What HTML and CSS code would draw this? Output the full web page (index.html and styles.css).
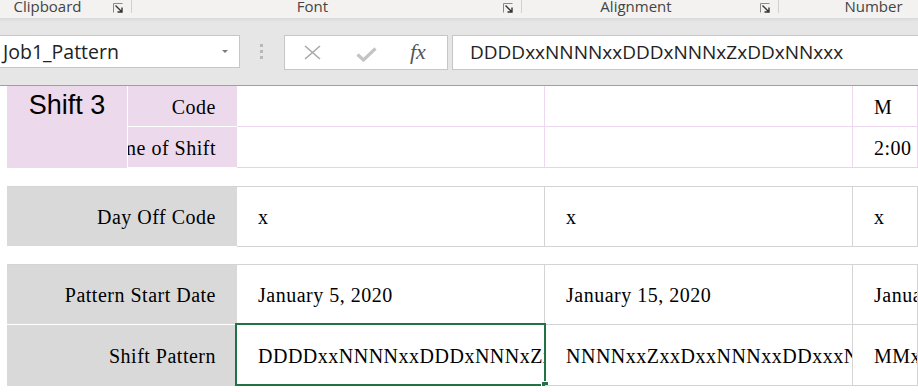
FILE: index.html
```html
<!DOCTYPE html>
<html lang="en">
<head>
    <meta charset="UTF-8">
    <meta name="viewport" content="width=device-width, initial-scale=1.0">
    <title>Job1_Pattern - Shift Patterns</title>
    <link rel="stylesheet" href="styles.css">
</head>
<body>
    <div class="ribbon">
        <div class="group group-clipboard">
            <span class="group-label">Clipboard</span>
            <svg class="launcher" viewBox="0 0 10 10" width="10" height="10"><path d="M0.5 9.5V0.5H9.5" fill="none" stroke="#8a8a8a"/><path d="M2.5 2.5L8.5 8.5M4.5 9H9V4.5" fill="none" stroke="#333" stroke-width="1.4"/></svg>
            <span class="group-sep"></span>
        </div>
        <div class="group group-font">
            <span class="group-label">Font</span>
            <svg class="launcher" viewBox="0 0 10 10" width="10" height="10"><path d="M0.5 9.5V0.5H9.5" fill="none" stroke="#8a8a8a"/><path d="M2.5 2.5L8.5 8.5M4.5 9H9V4.5" fill="none" stroke="#333" stroke-width="1.4"/></svg>
            <span class="group-sep"></span>
        </div>
        <div class="group group-alignment">
            <span class="group-label">Alignment</span>
            <svg class="launcher" viewBox="0 0 10 10" width="10" height="10"><path d="M0.5 9.5V0.5H9.5" fill="none" stroke="#8a8a8a"/><path d="M2.5 2.5L8.5 8.5M4.5 9H9V4.5" fill="none" stroke="#333" stroke-width="1.4"/></svg>
            <span class="group-sep"></span>
        </div>
        <div class="group group-number">
            <span class="group-label">Number</span>
        </div>
    </div>

    <div class="formula-bar">
        <div class="name-box">
            <span class="name-text">Job1_Pattern</span>
            <span class="name-arrow"></span>
        </div>
        <div class="grip"><i></i><i></i><i></i></div>
        <div class="fx-buttons">
            <svg class="btn-cancel" width="17" height="15" viewBox="0 0 17 15"><path d="M1 1L16 14M16 1L1 14" stroke="#a8a8a8" stroke-width="1.6" fill="none"/></svg>
            <svg class="btn-enter" width="21" height="15" viewBox="0 0 21 15"><path d="M1.5 7.5L7.5 13L19.5 1.5" stroke="#c4c4c4" stroke-width="3.2" fill="none"/></svg>
            <span class="fx">fx</span>
        </div>
        <div class="formula-input">DDDDxxNNNNxxDDDxNNNxZxDDxNNxxx</div>
    </div>

    <div class="sheet">
        <div class="shift-block">
            <div class="shift-name">Shift 3</div>
            <div class="shift-rows">
                <div class="shift-row">
                    <div class="label"><span>Code</span></div>
                    <div class="cell"></div>
                    <div class="cell"></div>
                    <div class="cell"><span class="cell-text">M</span></div>
                </div>
                <div class="shift-row">
                    <div class="label"><span>Start Time of Shift</span></div>
                    <div class="cell"></div>
                    <div class="cell"></div>
                    <div class="cell"><span class="cell-text">2:00 PM</span></div>
                </div>
            </div>
        </div>

        <div class="block">
            <div class="row">
                <div class="label"><span>Day Off Code</span></div>
                <div class="cell"><span class="cell-text">x</span></div>
                <div class="cell"><span class="cell-text">x</span></div>
                <div class="cell"><span class="cell-text">x</span></div>
            </div>
        </div>

        <div class="block">
            <div class="row">
                <div class="label"><span>Pattern Start Date</span></div>
                <div class="cell"><span class="cell-text">January 5, 2020</span></div>
                <div class="cell"><span class="cell-text">January 15, 2020</span></div>
                <div class="cell"><span class="cell-text">January 25, 2020</span></div>
            </div>
            <div class="row row-last">
                <div class="label"><span>Shift Pattern</span></div>
                <div class="cell cell-active">
                    <span class="cell-text">DDDDxxNNNNxxDDDxNNNxZxDDxNNxxx</span>
                    <div class="selection"><span class="fill-handle"></span></div>
                </div>
                <div class="cell"><span class="cell-text">NNNNxxZxxDxxNNNxxDDxxxNNNxxDDx</span></div>
                <div class="cell"><span class="cell-text">MMxxxMMMxxZxxMMxxxMMMxx</span></div>
            </div>
        </div>

        <div class="input-tip"></div>
    </div>
</body>
</html>
```

FILE: styles.css
```css
body {
    margin: 0;
    background-color: #ffffff;
    font-family: 'Open Sans', 'Noto Sans', sans-serif;
    overflow: hidden;
}

/* ribbon group captions */

.ribbon {
    display: flex;
    height: 18px;
    background-color: #f3f2f1;
    overflow: hidden;
    color: #444444;
    font-size: 15px;
    line-height: 18px;
}

.group {
    display: flex;
    align-items: flex-start;
    flex-shrink: 0;
}

.group-clipboard {
    width: 140px;
    margin-left: -8px;
}

.group-font {
    width: 390px;
}

.group-alignment {
    width: 257px;
}

.group-number {
    width: 189px;
}

.group-label {
    flex: 1;
    text-align: center;
    margin-top: -3px;
}

.launcher {
    margin: 3px 8px 0 10px;
}

.group-sep {
    width: 1px;
    height: 13px;
    background-color: #d2d0ce;
}

/* formula bar */

.formula-bar {
    display: flex;
    align-items: flex-start;
    height: 50px;
    padding-top: 17px;
    background: linear-gradient(#d9d9d9, #e6e6e6 4px);
    border-bottom: 1px solid #9f9f9f;
}

.name-box,
.fx-buttons,
.formula-input {
    height: 33px;
    background-color: #ffffff;
    border: 1px solid #c6c6c6;
}

.name-box {
    display: flex;
    align-items: center;
    width: 241px;
    margin-left: -1px;
    padding-left: 3px;
    box-sizing: border-box;
    font-size: 19.5px;
    color: #222222;
}

.name-text {
    flex: 1;
    margin-top: -1px;
}

.name-arrow {
    width: 0;
    height: 0;
    margin-right: 11px;
    border-left: 3.5px solid transparent;
    border-right: 3.5px solid transparent;
    border-top: 3.5px solid #7a7a7a;
}

.grip {
    display: flex;
    flex-direction: column;
    gap: 3px;
    margin: 9px 21px 0 20px;
}

.grip i {
    display: block;
    width: 3px;
    height: 3px;
    background-color: #b8b8b8;
}

.fx-buttons {
    display: flex;
    align-items: center;
    width: 162px;
    margin-right: 4px;
}

.btn-cancel {
    margin-left: 19px;
}

.btn-enter {
    margin-left: 35px;
    margin-top: 3px;
}

.fx {
    margin-left: 33px;
    margin-top: -2px;
    font-family: 'Liberation Serif', serif;
    font-style: italic;
    font-size: 22px;
    color: #555555;
}

.formula-input {
    flex: 1;
    border-right: none;
    padding-left: 17px;
    font-size: 19px;
    line-height: 32px;
    color: #222222;
    white-space: nowrap;
    overflow: hidden;
}

/* worksheet */

.sheet {
    position: relative;
    padding-left: 7px;
    font-family: 'Liberation Serif', serif;
    font-size: 20px;
    letter-spacing: 0.5px;
    color: #000000;
}

.shift-block {
    display: grid;
    grid-template-columns: 121px 1fr;
}

.shift-name {
    background-color: #ecd9ec;
    border-right: 1px solid #ffffff;
    box-sizing: border-box;
    padding-top: 6px;
    text-align: center;
    font-family: 'Liberation Sans', Arial, sans-serif;
    font-size: 27px;
    line-height: 27px;
    letter-spacing: 0;
}

.shift-row,
.row {
    display: grid;
    grid-template-columns: 109px 308px 308px 1fr;
    height: 41px;
}

.row {
    grid-template-columns: 230px 308px 308px 1fr;
    height: 60px;
}

.row-last {
    height: 61px;
}

.label {
    display: flex;
    justify-content: flex-end;
    align-items: center;
    padding: 2px 21px 0 0;
    white-space: nowrap;
    overflow: hidden;
    background-color: #d9d9d9;
    border-bottom: 1px solid #ffffff;
}

.shift-row .label {
    background-color: #ecd9ec;
}

.cell {
    position: relative;
    display: flex;
    align-items: center;
    min-width: 0;
    padding: 2px 0 0 21px;
    border-right: 1px solid #d4d4d4;
    border-bottom: 1px solid #d4d4d4;
}

.cell-text {
    flex: 1;
    min-width: 0;
    white-space: nowrap;
    overflow: hidden;
}

.shift-row .cell {
    border-color: #eed8f0;
}

.shift-row:last-child .cell {
    border-bottom-color: #e2d6e4;
}

.block {
    margin-top: 18px;
    border-top: 1px solid #d4d4d4;
}

.block + .block {
    margin-top: 17px;
}

.row-last .label {
    border-bottom-color: #d9d9d9;
}

.selection {
    position: absolute;
    left: -2px;
    top: -2px;
    width: 311px;
    height: 63px;
    box-sizing: border-box;
    border: 2px solid #217346;
}

.fill-handle {
    position: absolute;
    right: -5px;
    bottom: -5px;
    width: 6px;
    height: 6px;
    background-color: #217346;
    border: 1px solid #ffffff;
}

.input-tip {
    position: absolute;
    left: 391px;
    top: 303px;
    width: 169px;
    height: 20px;
    background-color: #ffffff;
    border: 1px solid #6b6b6b;
}
```
